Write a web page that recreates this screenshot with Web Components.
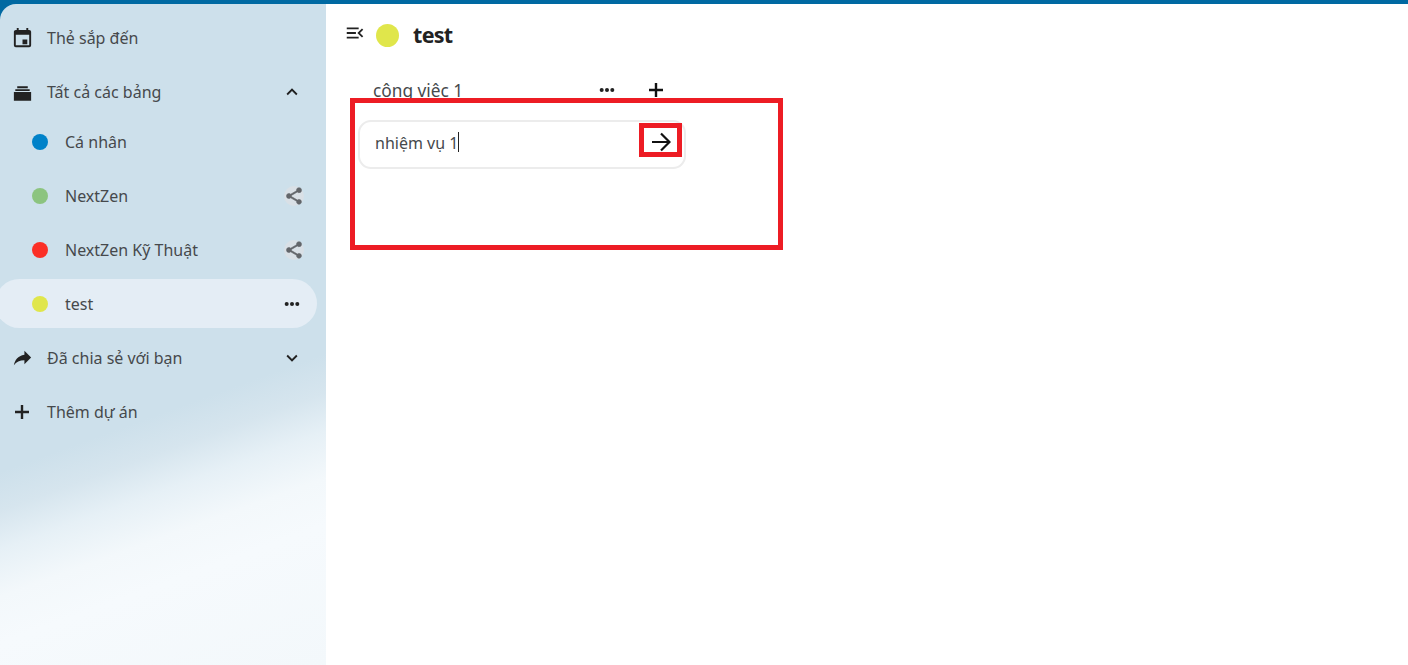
<!DOCTYPE html>
<html lang="vi">
<head>
<meta charset="utf-8">
<title>test</title>
<style>
  html, body { margin: 0; height: 100%; overflow: hidden; }
  body { font-family: "Noto Sans", "Open Sans", sans-serif; color: #46494c; }
</style>
</head>
<body>
<deck-app>
  <deck-sidebar slot="sidebar">
    <nav-row icon="calendar">Thẻ sắp đến</nav-row>
    <nav-group>
      <nav-row slot="head" icon="archive" trailing="up">Tất cả các bảng</nav-row>
      <nav-row dot="#0082c9">Cá nhân</nav-row>
      <nav-row dot="#8cc47f" trailing="share">NextZen</nav-row>
      <nav-row dot="#fb2f26" trailing="share">NextZen Kỹ Thuật</nav-row>
      <nav-row dot="#e0e64b" trailing="dots" active>test</nav-row>
    </nav-group>
    <nav-row icon="shared" trailing="down">Đã chia sẻ với bạn</nav-row>
    <nav-row icon="plus">Thêm dự án</nav-row>
  </deck-sidebar>
  <board-view slot="main" title-text="test" color="#e0e64b">
    <stack-column name="công việc 1">
      <task-composer value="nhiệm vụ 1"></task-composer>
    </stack-column>
  </board-view>
</deck-app>
<red-box style="left:350px;top:98px;width:433px;height:152px"></red-box>
<red-box style="left:639px;top:123px;width:43px;height:34px"></red-box>

<script>
const ICONS = {
  calendar: 'M19 3h-1V1h-2v2H8V1H6v2H5c-1.11 0-2 .9-2 2v14a2 2 0 0 0 2 2h14a2 2 0 0 0 2-2V5a2 2 0 0 0-2-2zm0 16H5V8h14v11zM12 13h5v5h-5z',
  shared: 'M21,11L14,4V8C7,9 4,14 3,19C5.5,15.5 9,13.9 14,13.9V18L21,11Z',
  plus: 'M19 13.2H13.2V19H10.8V13.2H5V10.8H10.8V5H13.2V10.8H19Z',
  up: 'M7.41,15.41L12,10.83L16.59,15.41L18,14L12,8L6,14L7.41,15.41Z',
  down: 'M7.41,8.58L12,13.17L16.59,8.58L18,10L12,16L6,10L7.41,8.58Z',
  share: 'M18,16.08C17.24,16.08 16.56,16.38 16.04,16.85L8.91,12.7C8.96,12.47 9,12.24 9,12C9,11.76 8.96,11.53 8.91,11.3L15.96,7.19C16.5,7.69 17.21,8 18,8A3,3 0 0,0 21,5A3,3 0 0,0 18,2A3,3 0 0,0 15,5C15,5.24 15.04,5.47 15.09,5.7L8.04,9.81C7.5,9.31 6.79,9 6,9A3,3 0 0,0 3,12A3,3 0 0,0 6,15C6.79,15 7.5,14.69 8.04,14.19L15.16,18.34C15.11,18.55 15.08,18.77 15.08,19C15.08,20.61 16.39,21.91 18,21.91C19.61,21.91 20.92,20.61 20.92,19A2.92,2.92 0 0,0 18,16.08Z',
  dots: 'M4 12a2.2 2.2 0 1 0 4.4 0a2.2 2.2 0 1 0-4.4 0zM9.8 12a2.2 2.2 0 1 0 4.4 0a2.2 2.2 0 1 0-4.4 0zM15.6 12a2.2 2.2 0 1 0 4.4 0a2.2 2.2 0 1 0-4.4 0z',
  menuOpen: 'M21,15.61L19.59,17L14.58,12L19.59,7L21,8.39L17.44,12L21,15.61M3,6H16V8H3V6M3,13V11H13V13H3M3,18V16H16V18H3Z',
  archive: 'M3 11.5h18v9h-18zM4.5 8.5h15v2h-15zM6.5 5.5h11v2h-11z'
};

function svgIcon(name, size, fill) {
  return `<svg width="${size}" height="${size}" viewBox="0 0 24 24" fill="${fill}" aria-hidden="true"><path d="${ICONS[name]}"/></svg>`;
}

class DeckApp extends HTMLElement {
  connectedCallback() {
    this.attachShadow({ mode: 'open' });
    this.shadowRoot.innerHTML = `
      <style>
        :host {
          display: grid;
          grid-template-columns: 326px 1fr;
          height: 100vh;
          box-sizing: border-box;
          padding-top: 4px;
          background: #0069a2;
        }
      </style>
      <slot name="sidebar"></slot>
      <slot name="main"></slot>
    `;
  }
}

class DeckSidebar extends HTMLElement {
  connectedCallback() {
    this.attachShadow({ mode: 'open' });
    this.shadowRoot.innerHTML = `
      <style>
        :host {
          display: flex;
          flex-direction: column;
          gap: 4px;
          box-sizing: border-box;
          padding: 9px 9px 0 0;
          border-top-left-radius: 16px;
          overflow: hidden;
          background: linear-gradient(160deg, #cde0eb 0%, #cde0eb 60%, #d6e5ee 65%, #e6f0f6 70%, #f3f8fb 76%, #f6fafd 82%, #f3f8fb 100%);
        }
      </style>
      <slot></slot>
    `;
  }
}

class NavGroup extends HTMLElement {
  connectedCallback() {
    this.attachShadow({ mode: 'open' });
    this.shadowRoot.innerHTML = `
      <style>
        :host { display: block; }
        .list { display: flex; flex-direction: column; gap: 4px; }
      </style>
      <slot name="head"></slot>
      <div class="list"><slot></slot></div>
    `;
  }
}

class NavRow extends HTMLElement {
  connectedCallback() {
    const dot = this.getAttribute('dot');
    const icon = this.getAttribute('icon');
    const trailing = this.getAttribute('trailing');
    let lead = '';
    if (dot) lead = `<span class="dot" style="background:${dot}"></span>`;
    else if (icon) lead = `<span class="icon">${svgIcon(icon, icon === 'plus' ? 24 : 23, '#222')}</span>`;

    let tail = '';
    if (trailing === 'share') tail = `<span class="tail share">${svgIcon('share', 20, '#63666a')}</span>`;
    else if (trailing) tail = `<span class="tail">${svgIcon(trailing, 22, '#222')}</span>`;

    this.attachShadow({ mode: 'open' });
    this.shadowRoot.innerHTML = `
      <style>
        :host {
          display: flex;
          align-items: center;
          height: 50px;
          font-size: 16px;
        }
        :host([active]) {
          background: #e4edf5;
          border-radius: 25px;
          margin-left: -5px;
          padding-left: 5px;
          height: 49px;
          margin-bottom: 1px;
        }
        .icon {
          display: flex;
          justify-content: center;
          width: 44px;
          flex: none;
        }
        .dot {
          width: 16px;
          height: 16px;
          border-radius: 50%;
          margin: 0 17px 0 32px;
          flex: none;
        }
        .label { flex: 1; margin-left: 3px; white-space: nowrap; }
        .dot + .label { margin-left: 0; }
        .tail {
          display: flex;
          justify-content: center;
          width: 22px;
          margin-right: 14px;
        }
        .share {
          width: 20px;
          height: 20px;
          margin-right: 13px;
          border-radius: 50%;
          background: #d9e0e6;
        }
        .share svg { stroke: #63666a; stroke-width: 0.7; }
      </style>
      ${lead}
      <span class="label"><slot></slot></span>
      ${tail}
    `;
  }
}

class BoardView extends HTMLElement {
  connectedCallback() {
    this.attachShadow({ mode: 'open' });
    this.shadowRoot.innerHTML = `
      <style>
        :host {
          display: block;
          background: #fff;
          padding: 19px 0 0 18px;
          min-width: 0;
        }
        header {
          display: flex;
          align-items: center;
          height: 24px;
        }
        .toggle { display: flex; margin: -4px 0 0 0; }
        .dot {
          width: 23px;
          height: 23px;
          border-radius: 50%;
          margin: 0 14px 0 10px;
          background: ${this.getAttribute('color')};
        }
        h2 {
          margin: -2px 0 0 0;
          font-size: 21.5px;
          font-weight: 700;
          letter-spacing: -0.7px;
          color: #222;
        }
        .stacks { display: flex; padding-top: 28px; }
      </style>
      <header>
        <span class="toggle">${svgIcon('menuOpen', 22, '#222')}</span>
        <span class="dot"></span>
        <h2>${this.getAttribute('title-text')}</h2>
      </header>
      <div class="stacks"><slot></slot></div>
    `;
  }
}

class StackColumn extends HTMLElement {
  connectedCallback() {
    this.attachShadow({ mode: 'open' });
    this.shadowRoot.innerHTML = `
      <style>
        :host {
          display: block;
          width: 328px;
          margin-left: 14px;
        }
        .head {
          display: flex;
          align-items: center;
          height: 30px;
          padding-left: 15px;
          margin-bottom: 15px;
          font-size: 17.3px;
        }
        .name { flex: 1; }
        .btn { display: flex; }
        .more { margin-right: 26px; }
        .add { margin-right: 18px; }
      </style>
      <div class="head">
        <span class="name">${this.getAttribute('name')}</span>
        <span class="btn more">${svgIcon('dots', 22, '#222')}</span>
        <span class="btn add">${svgIcon('plus', 24, '#111')}</span>
      </div>
      <slot></slot>
    `;
  }
}

class TaskComposer extends HTMLElement {
  connectedCallback() {
    this.attachShadow({ mode: 'open' });
    this.shadowRoot.innerHTML = `
      <style>
        :host {
          display: flex;
          align-items: center;
          box-sizing: border-box;
          height: 49px;
          width: 328px;
          padding: 0 13px 4px 15px;
          border: 2px solid #ececec;
          border-radius: 13px;
          font-size: 16px;
          background: #fff;
        }
        .value { flex: 1; display: flex; align-items: center; }
        .caret { width: 1px; height: 20px; background: #222; margin: -2px 0 0 0; }
        svg { display: block; margin-top: -2px; }
      </style>
      <span class="value"><span>${this.getAttribute('value')}</span><span class="caret"></span></span>
      <svg width="20" height="20" viewBox="0 0 20 20" fill="none" stroke="#111" stroke-width="2.2" aria-hidden="true">
        <path d="M1 10h17M10 1.5l8.5 8.5-8.5 8.5"/>
      </svg>
    `;
  }
}

class RedBox extends HTMLElement {
  connectedCallback() {
    this.attachShadow({ mode: 'open' });
    this.shadowRoot.innerHTML = `
      <style>
        :host {
          position: absolute;
          box-sizing: border-box;
          border: 5px solid #ed1c24;
          pointer-events: none;
        }
      </style>
    `;
  }
}

customElements.define('deck-app', DeckApp);
customElements.define('deck-sidebar', DeckSidebar);
customElements.define('nav-group', NavGroup);
customElements.define('nav-row', NavRow);
customElements.define('board-view', BoardView);
customElements.define('stack-column', StackColumn);
customElements.define('task-composer', TaskComposer);
customElements.define('red-box', RedBox);
</script>
</body>
</html>
